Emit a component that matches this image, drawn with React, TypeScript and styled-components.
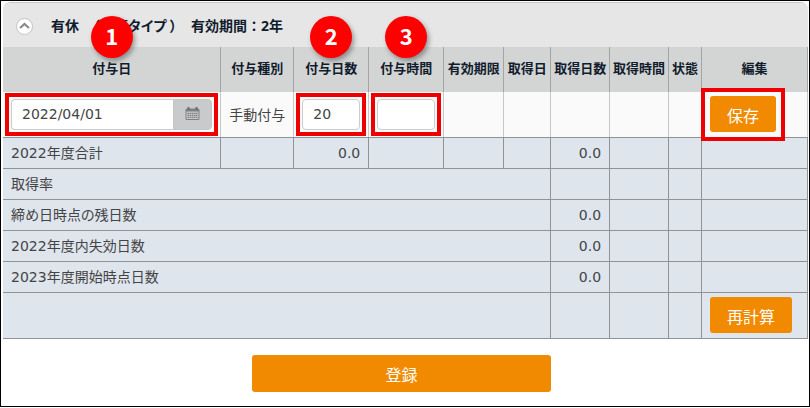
import React from "react";
import styled, { createGlobalStyle, css } from "styled-components";

const GlobalStyle = createGlobalStyle`
  *, *::before, *::after { box-sizing: border-box; }
  body { margin: 0; background: #fff; }
  body, button, input { font-family: "DejaVu Sans", "Noto Sans CJK JP", sans-serif; }
`;

const Frame = styled.main`
  border: 1px solid #000;
  padding: 1px 1px 14px 2px;
  color: #444;
  font-size: 14px;
`;

const Panel = styled.section`
  border-top: 1px solid #c9c5c9;
  border-radius: 8px 8px 0 0;
  overflow: hidden;
`;

const PanelHeader = styled.header`
  display: flex;
  align-items: center;
  gap: 18px;
  height: 44px;
  padding: 2px 13px 0;
  background: #e6e6e6;
`;

const CollapseButton = styled.button`
  display: grid;
  place-items: center;
  width: 17px;
  height: 17px;
  padding: 0;
  border: 1px solid #c4c4c4;
  border-radius: 50%;
  background: #fff;
`;

const Title = styled.h1`
  display: flex;
  gap: 14px;
  margin: 0;
  color: #111c2d;
  font-family: "Open Sans", "Noto Sans CJK JP", sans-serif;
  font-size: 14px;
  font-weight: 700;
  line-height: 20px;
  white-space: pre;
`;

const Kana = styled.span`
  font-feature-settings: "palt";
`;

const Table = styled.table`
  width: 100%;
  border-collapse: collapse;
  table-layout: fixed;
  font-feature-settings: "palt";
`;

const HeadCell = styled.th`
  height: 45px;
  padding: 0 0 2px;
  border-right: 1px solid #a4a6a4;
  background: #d3d5d4;
  color: #111c2d;
  font-size: 13px;
  font-weight: 700;
  line-height: 20px;
  white-space: nowrap;
`;

const HeadLabel = styled.span`
  position: relative;
`;

const Step = styled.span`
  position: absolute;
  left: 50%;
  bottom: 18px;
  z-index: 1;
  display: grid;
  place-items: center;
  width: 42px;
  height: 42px;
  margin-left: -21px;
  padding-bottom: 4px;
  border-radius: 50%;
  background: #fe0000;
  box-shadow: 2px 3px 5px rgba(0, 0, 0, 0.35);
  color: #fff;
  font-family: "Noto Sans CJK JP", sans-serif;
  font-size: 22px;
  line-height: 28px;
`;

const EditCell = styled.td<{ $center?: boolean }>`
  height: 45px;
  padding: 0 2px;
  border-right: 1px solid #c6c8c8;
  border-bottom: 1px solid #8f9395;
  background: #fafafa;
  text-align: ${(p) => (p.$center ? "center" : "left")};
`;

const SumCell = styled.td<{ $tall?: boolean; $number?: boolean }>`
  height: ${(p) => (p.$tall ? 46 : 31)}px;
  padding: 0 8px;
  border-right: 1px solid #8f9395;
  border-bottom: 1px solid #8f9395;
  background: #dfe5ed;
  line-height: 20px;
  text-align: ${(p) => (p.$number ? "right" : "left")};
`;

const Marked = styled.div<{ $action?: boolean }>`
  display: flex;
  border: 4px solid #ee0000;
  ${(p) =>
    p.$action
      ? css`
          position: relative;
          z-index: 1;
          width: fit-content;
          margin: -4px 0 -5px -3px;
          padding: 4px 5px 5px;
        `
      : css`
          padding: 2px;
        `}
`;

const Field = styled.input`
  flex: 1;
  min-width: 0;
  width: 100%;
  height: 31px;
  padding: 0 10px;
  border: 1px solid #ccc;
  border-radius: 4px;
  background: #fff;
  color: #444;
  font-size: 14px;
`;

const DateField = styled(Field)`
  border-right: 0;
  border-radius: 4px 0 0 4px;
`;

const CalendarButton = styled.button`
  display: grid;
  place-items: center;
  width: 39px;
  height: 31px;
  padding: 0;
  border: 1px solid #c4c6c8;
  border-radius: 0 4px 4px 0;
  background: #c8cacc;
`;

const ActionButton = styled.button`
  height: 36px;
  padding: 5px 17px 0;
  border: 0;
  border-radius: 3px;
  background: #f18a00;
  color: #fff;
  font-size: 16px;
  line-height: 24px;
  white-space: nowrap;
`;

const Footer = styled.footer`
  display: flex;
  justify-content: center;
  padding: 16px 8px 0 0;
`;

const SubmitButton = styled(ActionButton)`
  width: 37.5%;
  height: 37px;
`;

const columns = [
  { label: "付与日", width: 218, step: 1 },
  { label: "付与種別", width: 73 },
  { label: "付与日数", width: 75, step: 2 },
  { label: "付与時間", width: 75, step: 3 },
  { label: "有効期限", width: 60 },
  { label: "取得日", width: 47 },
  { label: "取得日数", width: 59 },
  { label: "取得時間", width: 59 },
  { label: "状態", width: 33 },
  { label: "編集", width: 106 },
];

const summaries = [
  { label: "取得率", value: "" },
  { label: "締め日時点の残日数", value: "0.0" },
  { label: "2022年度内失効日数", value: "0.0" },
  { label: "2023年度開始時点日数", value: "0.0" },
];

const total = columns.reduce((sum, c) => sum + c.width, 0);

const Col = styled.col<{ $share: number }>`
  width: ${(p) => p.$share}%;
`;

const Chevron = () => (
  <svg width="11" height="8" viewBox="0 0 11 8" aria-hidden="true">
    <path d="M1 6 5.500 2l4.500 4" fill="none" stroke="#8a8a8a" strokeWidth="2.200" />
  </svg>
);

const CalendarIcon = () => (
  <svg width="15" height="14" viewBox="0 0 15 14" aria-hidden="true">
    <rect x="0.500" y="1.500" width="14" height="11.500" rx="1.500" fill="#7d7f82" />
    <path d="M3.500 0v3M11.500 0v3" stroke="#6c6e70" strokeWidth="2" />
    <path d="M1.500 4.500h12v7.500h-12Z" fill="#c8cacc" />
    <path d="M2.500 6.300h10M2.500 8.300h10M2.500 10.300h10" stroke="#808284" strokeWidth="1.200" strokeDasharray="1.600 .5" />
  </svg>
);

export default function App() {
  return (
    <>
      <GlobalStyle />
      <Frame>
        <Panel>
          <PanelHeader>
            <CollapseButton type="button" aria-label="折りたたむ">
              <Chevron />
            </CollapseButton>
            <Title>
              <span>有休</span>
              <Kana>（積算タイプ ）</Kana>
              <span>有効期間：2年</span>
            </Title>
          </PanelHeader>
          <Table>
            <colgroup>
              {columns.map((c) => (
                <Col key={c.label} $share={(c.width / total) * 100} />
              ))}
            </colgroup>
            <thead>
              <tr>
                {columns.map((c) => (
                  <HeadCell key={c.label} scope="col">
                    <HeadLabel>
                      {c.label}
                      {c.step && <Step>{c.step}</Step>}
                    </HeadLabel>
                  </HeadCell>
                ))}
              </tr>
            </thead>
            <tbody>
              <tr>
                <EditCell>
                  <Marked>
                    <DateField aria-label="付与日" defaultValue="2022/04/01" />
                    <CalendarButton type="button" aria-label="カレンダー">
                      <CalendarIcon />
                    </CalendarButton>
                  </Marked>
                </EditCell>
                <EditCell $center>手動付与</EditCell>
                <EditCell>
                  <Marked>
                    <Field aria-label="付与日数" defaultValue="20" />
                  </Marked>
                </EditCell>
                <EditCell>
                  <Marked>
                    <Field aria-label="付与時間" />
                  </Marked>
                </EditCell>
                <EditCell />
                <EditCell />
                <EditCell />
                <EditCell />
                <EditCell />
                <EditCell>
                  <Marked $action>
                    <ActionButton type="button">保存</ActionButton>
                  </Marked>
                </EditCell>
              </tr>
              <tr>
                <SumCell>2022年度合計</SumCell>
                <SumCell />
                <SumCell $number>0.0</SumCell>
                <SumCell />
                <SumCell />
                <SumCell />
                <SumCell $number>0.0</SumCell>
                <SumCell />
                <SumCell />
                <SumCell />
              </tr>
              {summaries.map((s) => (
                <tr key={s.label}>
                  <SumCell colSpan={6}>{s.label}</SumCell>
                  <SumCell $number>{s.value}</SumCell>
                  <SumCell />
                  <SumCell />
                  <SumCell />
                </tr>
              ))}
              <tr>
                <SumCell $tall colSpan={6} />
                <SumCell />
                <SumCell />
                <SumCell />
                <SumCell>
                  <ActionButton type="button">再計算</ActionButton>
                </SumCell>
              </tr>
            </tbody>
          </Table>
        </Panel>
        <Footer>
          <SubmitButton type="button">登録</SubmitButton>
        </Footer>
      </Frame>
    </>
  );
}
